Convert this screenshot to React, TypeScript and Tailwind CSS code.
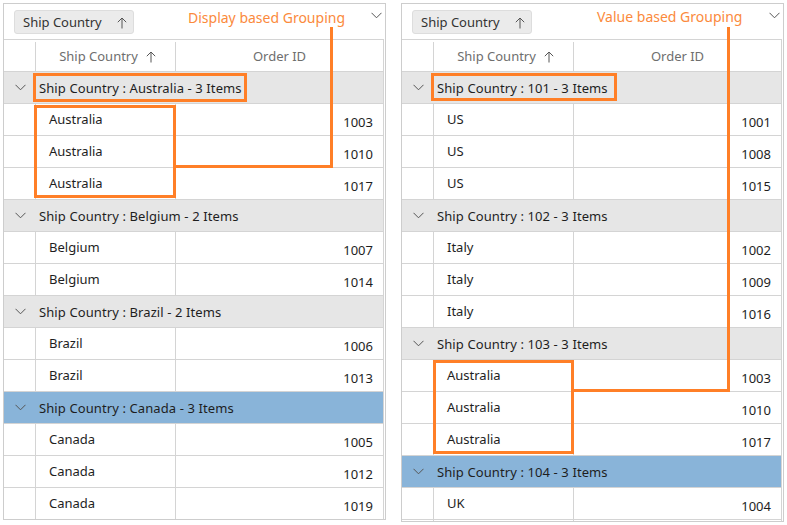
import React from 'react';

type Row = { country: string; id: number };
type Group = { title: string; count: number; rows: Row[]; selected?: boolean };

const leftGroups: Group[] = [
  { title: 'Australia', count: 3, rows: [{ country: 'Australia', id: 1003 }, { country: 'Australia', id: 1010 }, { country: 'Australia', id: 1017 }] },
  { title: 'Belgium', count: 2, rows: [{ country: 'Belgium', id: 1007 }, { country: 'Belgium', id: 1014 }] },
  { title: 'Brazil', count: 2, rows: [{ country: 'Brazil', id: 1006 }, { country: 'Brazil', id: 1013 }] },
  { title: 'Canada', count: 3, selected: true, rows: [{ country: 'Canada', id: 1005 }, { country: 'Canada', id: 1012 }, { country: 'Canada', id: 1019 }] },
];

const rightGroups: Group[] = [
  { title: '101', count: 3, rows: [{ country: 'US', id: 1001 }, { country: 'US', id: 1008 }, { country: 'US', id: 1015 }] },
  { title: '102', count: 3, rows: [{ country: 'Italy', id: 1002 }, { country: 'Italy', id: 1009 }, { country: 'Italy', id: 1016 }] },
  { title: '103', count: 3, rows: [{ country: 'Australia', id: 1003 }, { country: 'Australia', id: 1010 }, { country: 'Australia', id: 1017 }] },
  { title: '104', count: 3, selected: true, rows: [{ country: 'UK', id: 1004 }, { country: '', id: 0 }] },
];

const Chevron = ({ className = '' }: { className?: string }) => (
  <svg width="11" height="7" viewBox="0 0 11 7" className={className}>
    <path d="M0.5 0.8 L5.5 5.8 L10.5 0.8" fill="none" stroke="currentColor" strokeWidth="1" />
  </svg>
);

const Arrow = () => (
  <svg width="10" height="12" viewBox="0 0 10 12" className="text-[#555]">
    <path d="M5 11.5 V1 M0.8 5.2 L5 1 L9.2 5.2" fill="none" stroke="currentColor" strokeWidth="1" />
  </svg>
);

function Grid({ groups, tall }: { groups: Group[]; tall?: boolean }) {
  return (
    <div className={`relative w-[383px] border border-[#cdcdcd] bg-white overflow-hidden ${tall ? 'h-[519px]' : 'h-[517px]'}`}>
      {/* group drop area */}
      <div className="relative h-[35px] pl-[10px] pt-[6px]">
        <div className="flex h-[24px] w-[120px] items-center justify-between rounded-[3px] border border-[#dddddd] bg-[#ebebeb] pl-[8px] pr-[6px] pt-[2px] text-[13px] text-[#333]">
          <span>Ship Country</span>
          <Arrow />
        </div>
        <Chevron className="absolute right-[3px] top-[8px] text-[#555]" />
      </div>
      <div className="mr-px border-r border-[#d4d4d4]">
        {/* header */}
        <div className="flex h-[33px] border-y border-[#d4d4d4] pt-[2px] text-[13px] text-[#6e6e6e]">
          <div className="w-[31px]" />
          <div className="flex w-[141px] items-center justify-center gap-[8px] border-x border-[#d4d4d4] pl-[4px]">
            <span>Ship Country</span>
            <Arrow />
          </div>
          <div className="flex flex-1 items-center justify-center">Order ID</div>
        </div>
        {groups.map((g) => (
          <div key={g.title}>
            <div className={`flex h-[32px] items-center border-b border-[#d4d4d4] text-[13px] text-[#1e1e1e] ${g.selected ? 'bg-[#89b4d9]' : 'bg-[#e6e6e6]'}`}>
              <div className="flex w-[31px] justify-center pl-[1px]">
                <Chevron className="text-[#555]" />
              </div>
              <span className="pl-[4px] pt-[2px] tracking-[0.1px]">Ship Country : {g.title} - {g.count} Items</span>
            </div>
            {g.rows.map((r, i) => (
              <div key={i} className="flex h-[32px] border-b border-[#d4d4d4] text-[13px] text-[#1e1e1e]">
                <div className="w-[31px]" />
                <div className="flex w-[141px] items-center border-x border-[#d4d4d4] pl-[13px]">{r.country}</div>
                <div className="flex flex-1 items-center justify-end pr-[10px] pt-[6px]">{r.id ? r.id : ''}</div>
              </div>
            ))}
          </div>
        ))}
      </div>
    </div>
  );
}

const orange = '#ff7f27';

export default function App() {
  return (
    <div className="relative h-[525px] w-[787px] bg-white" style={{ fontFamily: '"Noto Sans", "Open Sans", sans-serif' }}>
      <div className="flex gap-[15px] pl-[3px] pt-[3px]">
        <Grid groups={leftGroups} />
        <Grid groups={rightGroups} tall />
      </div>

      {/* annotations */}
      <span className="absolute left-[188px] top-[8px] text-[14px] leading-[20px] text-[#fb8a3c]">Display based Grouping</span>
      <span className="absolute left-[597px] top-[7px] text-[14px] leading-[20px] text-[#fb8a3c]">Value based Grouping</span>
      <svg className="pointer-events-none absolute left-0 top-0" width="787" height="525">
        <g fill="none" stroke={orange} strokeWidth="3">
          <rect x="34.5" y="74.5" width="211" height="26" />
          <rect x="35.5" y="106.5" width="139" height="90" />
          <polyline points="331.5,27 331.5,166.5 176,166.5" />
          <rect x="432.5" y="74.5" width="183" height="25" />
          <rect x="434.5" y="361.5" width="138" height="91" />
          <polyline points="728.5,27 728.5,390.5 574,390.5" />
        </g>
      </svg>
    </div>
  );
}
